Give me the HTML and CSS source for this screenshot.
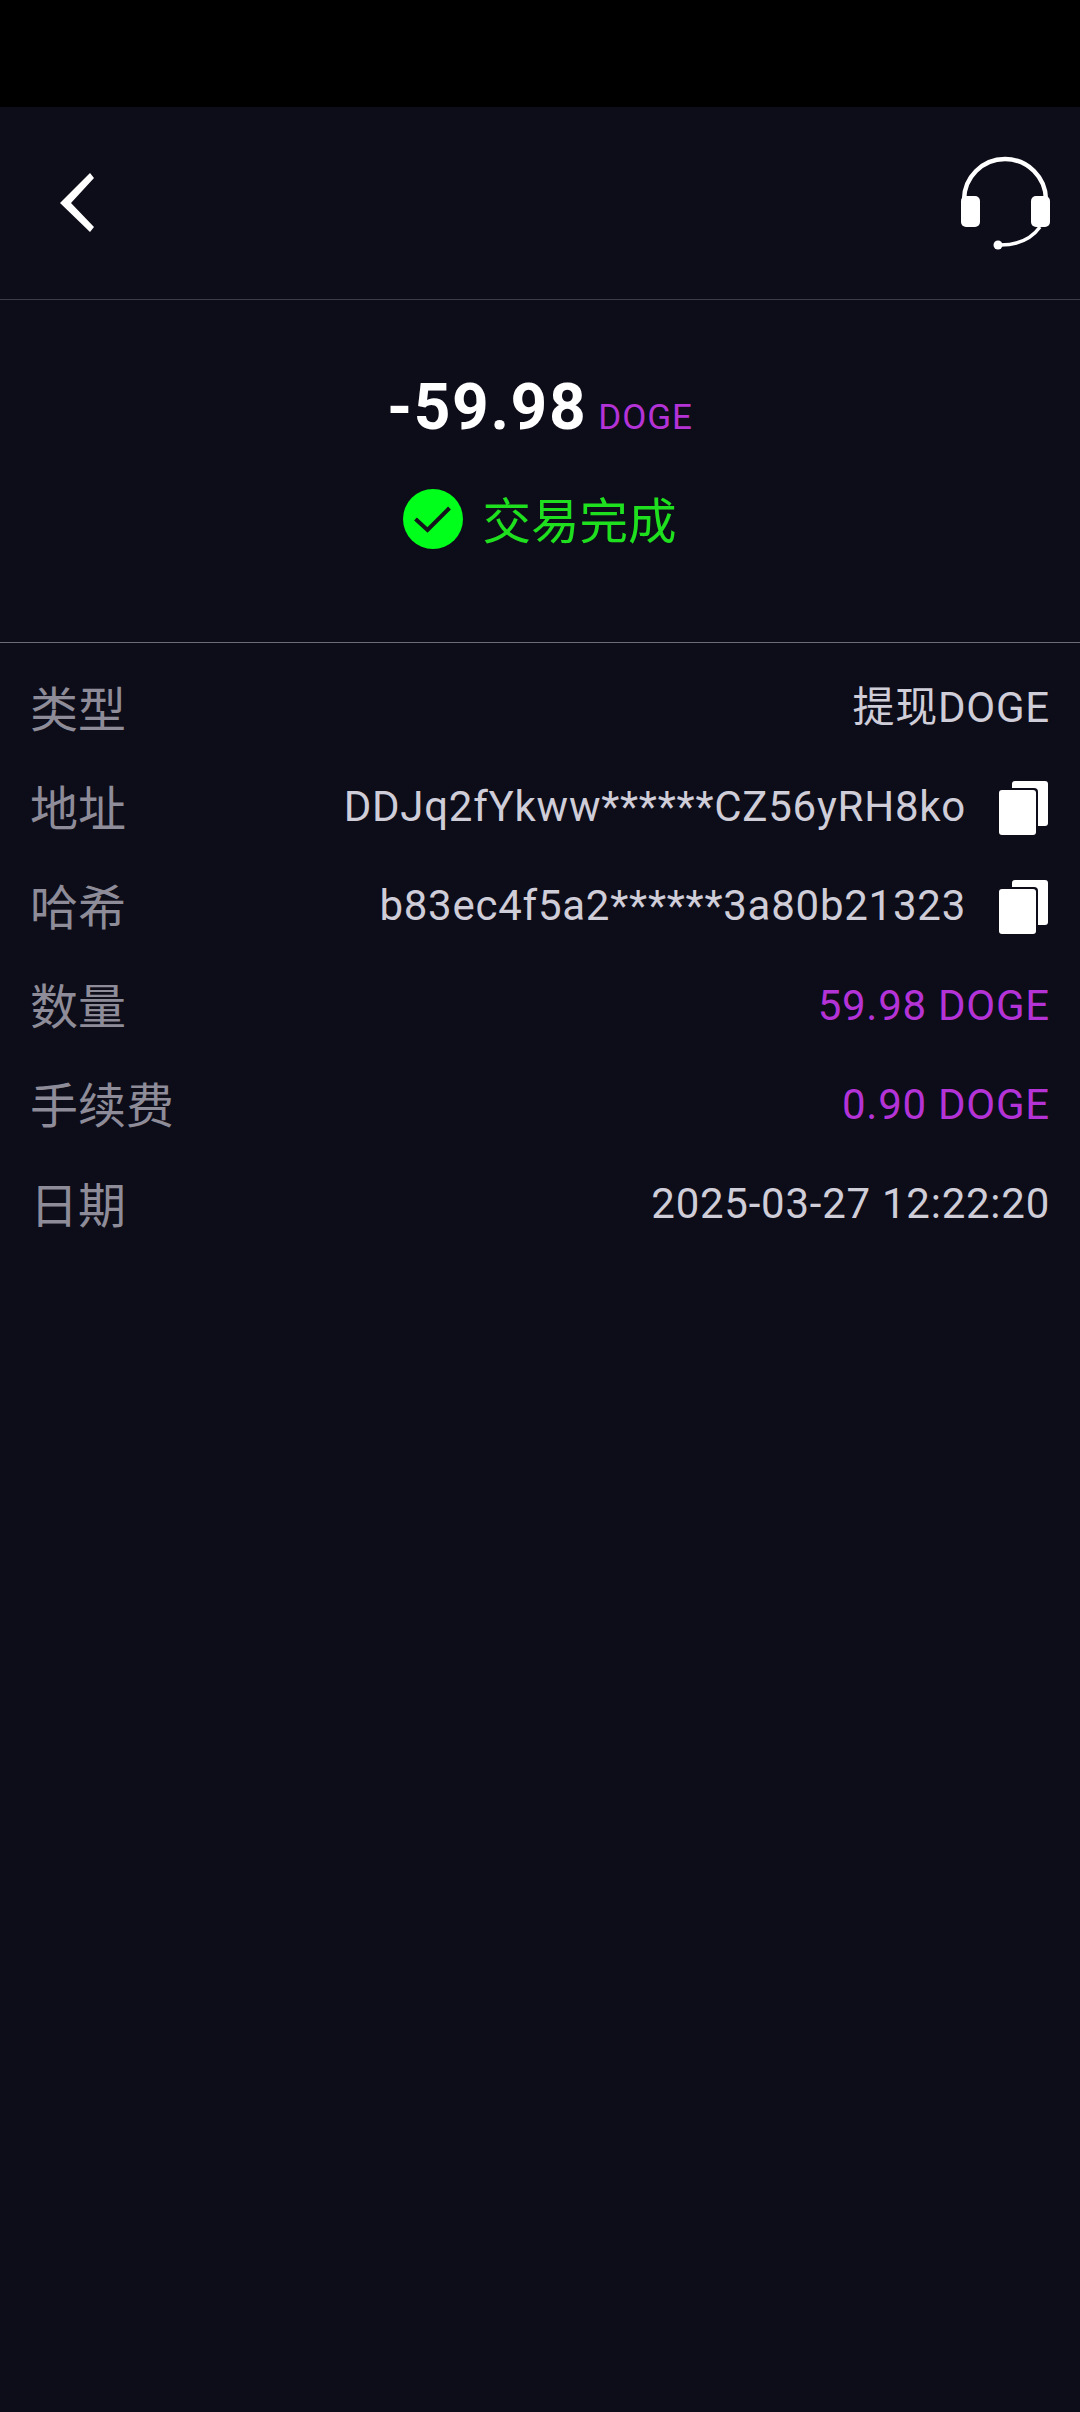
FILE: index.html
```html
<!DOCTYPE html>
<html lang="zh-CN">
<head>
    <meta charset="UTF-8">
    <meta name="viewport" content="width=device-width, initial-scale=1.0">
    <title>交易详情</title>
    <link rel="stylesheet" href="styles.css">
</head>
<body>
    <div class="status-bar"></div>

    <header class="top-bar">
        <svg class="icon-back" width="34" height="59" viewBox="0 0 34 59">
            <polygon points="30,0 34,5 11,30 34,54 30,59 0,30" fill="#fff"/>
        </svg>
        <svg class="icon-support" width="94" height="96" viewBox="0 0 94 96">
            <path d="M6 45 A41 41 0 0 1 88 45" fill="none" stroke="#fff" stroke-width="4.5"/>
            <rect x="3" y="41" width="19" height="31" rx="5" fill="#fff"/>
            <rect x="73" y="41" width="19" height="31" rx="5" fill="#fff"/>
            <path d="M82 72 C74 83 60 90 42 90" fill="none" stroke="#fff" stroke-width="3.5"/>
            <circle cx="40" cy="90" r="4.5" fill="#fff"/>
        </svg>
    </header>

    <section class="summary">
        <div class="amount">
            <span class="amount-num">-59.98</span>
            <span class="amount-unit">DOGE</span>
        </div>
        <div class="status">
            <svg class="icon-check" width="60" height="60" viewBox="0 0 60 60">
                <circle cx="30" cy="30" r="30" fill="#00ff1a"/>
                <path d="M12.5 30 L24.5 41 L46.5 19" fill="none" stroke="#14141c" stroke-width="4"/>
            </svg>
            <span class="status-text">交易完成</span>
        </div>
    </section>

    <section class="details">
        <div class="row">
            <span class="label">类型</span>
            <span class="value">提现DOGE</span>
        </div>
        <div class="row">
            <span class="label">地址</span>
            <span class="value-wrap">
                <span class="value">DDJq2fYkww******CZ56yRH8ko</span>
                <svg class="icon-copy" width="50" height="54" viewBox="0 0 50 54">
                    <rect x="13" y="0" width="36" height="45" rx="3" fill="#fff"/>
                    <rect x="-1" y="7" width="40" height="48" rx="4" fill="#0d0c19"/>
                    <rect x="0" y="9" width="37" height="45" rx="3" fill="#fff"/>
                </svg>
            </span>
        </div>
        <div class="row">
            <span class="label">哈希</span>
            <span class="value-wrap">
                <span class="value">b83ec4f5a2******3a80b21323</span>
                <svg class="icon-copy" width="50" height="54" viewBox="0 0 50 54">
                    <rect x="13" y="0" width="36" height="45" rx="3" fill="#fff"/>
                    <rect x="-1" y="7" width="40" height="48" rx="4" fill="#0d0c19"/>
                    <rect x="0" y="9" width="37" height="45" rx="3" fill="#fff"/>
                </svg>
            </span>
        </div>
        <div class="row">
            <span class="label">数量</span>
            <span class="value purple">59.98 DOGE</span>
        </div>
        <div class="row">
            <span class="label">手续费</span>
            <span class="value purple">0.90 DOGE</span>
        </div>
        <div class="row">
            <span class="label">日期</span>
            <span class="value">2025-03-27 12:22:20</span>
        </div>
    </section>
</body>
</html>
```

FILE: styles.css
```css
* {
    box-sizing: border-box;
    font-family: 'Roboto', 'Noto Sans CJK SC', sans-serif;
}

body {
    margin: 0;
    min-height: 2412px;
    background: #0d0c19;
}

.status-bar {
    height: 107px;
    background: #000;
}

.top-bar {
    height: 193px;
    padding: 48px 28px 0 60px;
    display: flex;
    justify-content: space-between;
    align-items: flex-start;
    border-bottom: 1px solid #3c3c46;
}

.icon-back {
    margin-top: 18px;
}

.summary {
    height: 343px;
    border-bottom: 1px solid #6c6c76;
    padding-top: 70px;
    display: flex;
    flex-direction: column;
    align-items: center;
}

.amount {
    display: flex;
    align-items: baseline;
    gap: 11px;
    height: 80px;
}

.amount-num {
    color: #fff;
    font-size: 64px;
    font-weight: 700;
    letter-spacing: 1.6px;
}

.amount-unit {
    color: #b433d6;
    font-size: 35px;
    letter-spacing: 1px;
}

.status {
    margin-top: 34px;
    display: flex;
    align-items: center;
    gap: 19px;
    color: #1fe01f;
    font-size: 48.5px;
    line-height: 60px;
}

.status-text {
    padding-top: 9px;
}

.details {
    padding: 17px 30px 0;
}

.row {
    height: 99.2px;
    display: flex;
    justify-content: space-between;
    align-items: center;
}

.label {
    color: #8e8c98;
    font-size: 48px;
    line-height: 60px;
    padding-top: 2px;
}

.value {
    color: #cfcdd8;
    font-size: 42px;
    line-height: 50px;
    letter-spacing: 0.75px;
    padding-bottom: 3px;
}

.purple {
    color: #b433d6;
}

.value-wrap {
    display: flex;
    align-items: center;
    gap: 33px;
}

.icon-copy {
    margin: 0 1px 2px 0;
}
```
